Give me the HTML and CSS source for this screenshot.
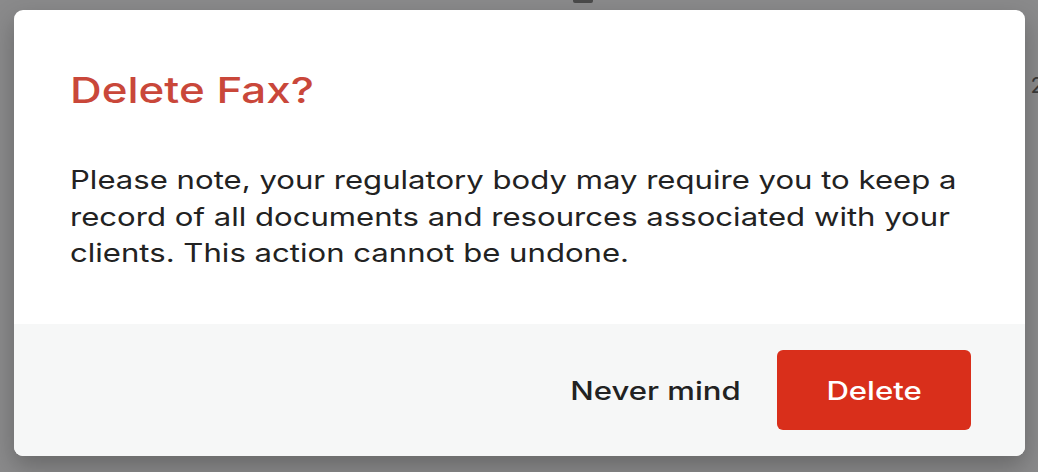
FILE: index.html
```html
<html lang="en">

<head>
    <title>Delete Fax</title>
    <link rel="stylesheet" href="styles.css">
</head>

<body>
    <div class="backdrop">
        <span class="peek-icon"></span>
        <span class="peek">2</span>
        <div class="dialog">
            <div class="content">
                <h1 class="title"><span class="wide">Delete Fax?</span></h1>
                <p class="message"><span class="wide">Please note, your regulatory body may require you to keep a<br>record of all documents and resources associated with your<br>clients. This action cannot be undone.</span></p>
            </div>
            <div class="actions">
                <button class="cancel"><span class="wide">Never mind</span></button>
                <button class="danger"><span class="wide">Delete</span></button>
            </div>
        </div>
    </div>
</body>

</html>
```

FILE: styles.css
```css
* {
    box-sizing: border-box;
}

body {
    margin: 0;
    font-family: Inter, 'Noto Sans', sans-serif;
    background: #8a8a8b;
}

.backdrop {
    position: relative;
    height: 472px;
    padding: 10px 13px 0 14px;
    overflow: hidden;
}

/* bits of the page behind the overlay */
.peek-icon {
    position: absolute;
    left: 573px;
    top: -6px;
    width: 20px;
    height: 9px;
    border-radius: 2px;
    background: #4a4a4a;
}

.peek {
    position: absolute;
    right: -6px;
    top: 72px;
    font-size: 22px;
    color: #3a3a3a;
}

.dialog {
    position: relative;
    background: white;
    border-radius: 9px;
    overflow: hidden;
    box-shadow: 0 10px 24px rgba(0, 0, 0, 0.25);
}

/* the screenshot's text is drawn a little wide */
.wide {
    display: inline-block;
    transform: scaleX(1.22);
    transform-origin: left center;
    white-space: nowrap;
}

.content {
    padding: 58px 56px 0;
    height: 314px;
}

.title {
    margin: 0 0 50px;
    font-size: 36px;
    font-weight: 500;
    line-height: 44px;
    color: #c9473a;
}

.message {
    margin: 0;
    font-size: 25.5px;
    line-height: 36.5px;
    color: #222;
}

.actions {
    display: flex;
    justify-content: flex-end;
    align-items: center;
    gap: 36px;
    padding: 26px 54px;
    background: #f6f7f7;
}

button {
    font-family: inherit;
    font-size: 25.5px;
    font-weight: 500;
    border: none;
    cursor: pointer;
}

.cancel {
    background: none;
    color: #222;
    padding: 0;
}

.cancel .wide {
    transform-origin: right center;
}

.danger {
    width: 194px;
    height: 80px;
    border-radius: 6px;
    background: #d92f1b;
    color: white;
}

.danger .wide {
    transform-origin: center;
}
```
